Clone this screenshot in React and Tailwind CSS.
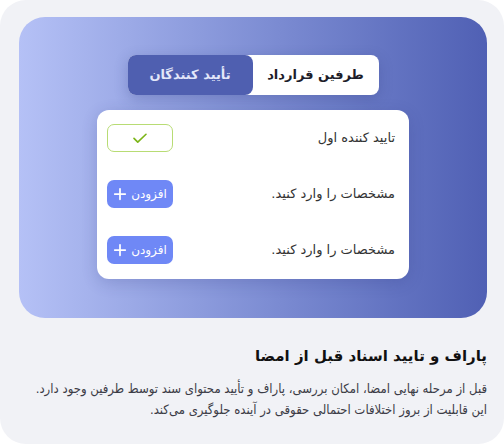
import React from "react";

const Check = () => (
  <svg width="18" height="18" viewBox="0 0 24 24" fill="none" stroke="#7cb518" strokeWidth="2.2" strokeLinecap="round" strokeLinejoin="round">
    <path d="M4 12.5l5 5L20 7" />
  </svg>
);

const Plus = () => (
  <svg width="14" height="14" viewBox="0 0 24 24" fill="none" stroke="#ffffff" strokeWidth="3" strokeLinecap="round">
    <path d="M12 3v18M3 12h18" />
  </svg>
);

const AddButton = () => (
  <div className="flex h-[28px] w-[66px] items-center justify-center gap-1 rounded-[7px] bg-[#6f88f6] text-[12px] text-white">
    <span>افزودن</span>
    <Plus />
  </div>
);

const Row = ({ label, children }) => (
  <div className="flex h-[28px] items-center justify-between">
    <div className="text-[13px] text-[#333]">{label}</div>
    {children}
  </div>
);

export default function App() {
  return (
    <div dir="rtl" className="h-[444px] w-[504px] bg-white font-['DejaVu_Sans',sans-serif]">
      <div className="flex h-full flex-col rounded-[26px] bg-[#f1f2f6] pl-[19px] pr-[17px] pt-[17px]">
        <div className="flex h-[301px] flex-col items-center rounded-[26px] bg-gradient-to-l from-[#5060b4] to-[#b5c1f6] pt-[38px]">
          <div className="flex h-[40px] w-[251px] rounded-[8px] bg-white shadow-[0_4px_14px_rgba(40,50,120,0.25)]">
            <div className="flex w-[126px] items-center justify-center text-[13px] font-bold text-[#1e1e2a]">
              طرفین قرارداد
            </div>
            <div className="flex w-[125px] items-center justify-center rounded-[8px] bg-[#4f5fb0] text-[13px] font-bold text-[#e3e7fa]">
              تأیید کنندگان
            </div>
          </div>
          <div className="mt-[15px] flex h-[169px] w-[312px] flex-col gap-[28px] rounded-[12px] bg-white pl-[10px] pr-[14px] pt-[14px] shadow-[0_4px_16px_rgba(40,50,120,0.2)]">
            <Row label="تایید کننده اول">
              <div className="flex h-[28px] w-[66px] items-center justify-center rounded-[7px] border-[1.5px] border-[#b8dc74] bg-white">
                <Check />
              </div>
            </Row>
            <Row label="مشخصات را وارد کنید.">
              <AddButton />
            </Row>
            <Row label="مشخصات را وارد کنید.">
              <AddButton />
            </Row>
          </div>
        </div>
        <div className="mt-[27px] text-[15px] font-bold text-[#111]">پاراف و تایید اسناد قبل از امضا</div>
        <div className="mt-[10px] whitespace-nowrap font-['DejaVu_Sans_Condensed',sans-serif] text-[13px] leading-[21px] text-[#3c3c46]">
          قبل از مرحله نهایی امضا، امکان بررسی، پاراف و تأیید محتوای سند توسط طرفین وجود دارد.
          <br />
          این قابلیت از بروز اختلافات احتمالی حقوقی در آینده جلوگیری می‌کند.
        </div>
      </div>
    </div>
  );
}
